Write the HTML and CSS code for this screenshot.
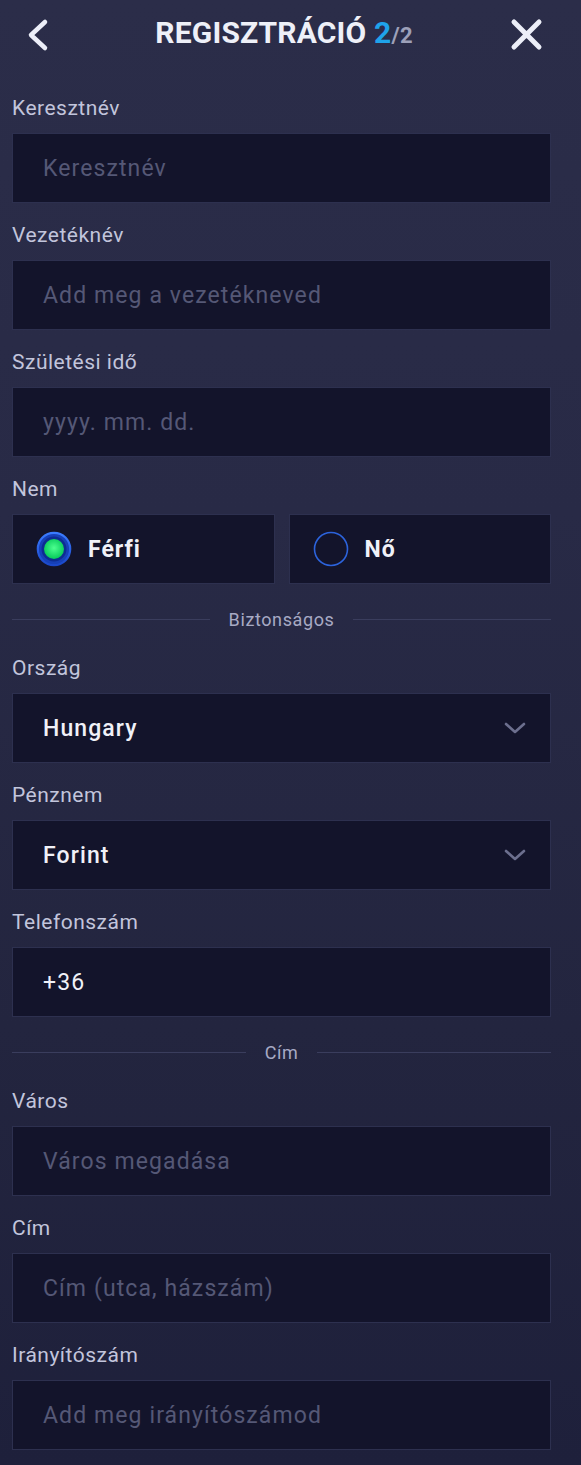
FILE: index.html
```html
<!DOCTYPE html>
<html lang="hu">
<head>
<meta charset="utf-8">
<title>Regisztráció 2/2</title>
<link rel="stylesheet" href="styles.css">
</head>
<body>
<div class="page">
  <header class="topbar">
    <button class="icon-btn back" aria-label="Vissza">
      <svg width="36" height="36" viewBox="0 0 36 36"><polyline points="22,5 8,18 22,31" fill="none" stroke="#eceef8" stroke-width="4.5" stroke-linecap="round" stroke-linejoin="round"/></svg>
    </button>
    <h1 class="title">REGISZTRÁCIÓ <span class="step">2</span><span class="total">/2</span></h1>
    <button class="icon-btn close" aria-label="Bezárás">
      <svg width="36" height="36" viewBox="0 0 36 36"><path d="M5 5 L30 30 M30 5 L5 30" fill="none" stroke="#eceef8" stroke-width="5" stroke-linecap="round"/></svg>
    </button>
  </header>

  <form class="form">
    <div class="field">
      <label class="label">Keresztnév</label>
      <div class="input placeholder">Keresztnév</div>
    </div>
    <div class="field">
      <label class="label">Vezetéknév</label>
      <div class="input placeholder">Add meg a vezetékneved</div>
    </div>
    <div class="field">
      <label class="label">Születési idő</label>
      <div class="input placeholder">yyyy. mm. dd.</div>
    </div>
    <div class="field">
      <label class="label">Nem</label>
      <div class="radio-row">
        <div class="input radio selected">
          <svg class="radio-dot" width="36" height="36" viewBox="0 0 36 36">
            <defs>
              <radialGradient id="green" cx="50%" cy="45%" r="55%">
                <stop offset="0" stop-color="#4dff8f"/>
                <stop offset="1" stop-color="#05c95a"/>
              </radialGradient>
              <linearGradient id="ring" x1="0" y1="0" x2="0" y2="1">
                <stop offset="0" stop-color="#3b7cff"/>
                <stop offset="1" stop-color="#1a47c9"/>
              </linearGradient>
            </defs>
            <circle cx="18" cy="18" r="16.2" fill="#1640b8" stroke="url(#ring)" stroke-width="2.2"/>
            <circle cx="18" cy="18" r="12.5" fill="#0d2d92"/>
            <circle cx="18" cy="18" r="10" fill="url(#green)"/>
          </svg>
          <span class="radio-text">Férfi</span>
        </div>
        <div class="input radio">
          <svg class="radio-dot" width="36" height="36" viewBox="0 0 36 36">
            <circle cx="18" cy="18" r="16.5" fill="none" stroke="#2c63dc" stroke-width="1.6"/>
          </svg>
          <span class="radio-text">Nő</span>
        </div>
      </div>
    </div>

    <div class="divider"><span class="divider-text">Biztonságos</span></div>

    <div class="field">
      <label class="label">Ország</label>
      <div class="input select">
        <span class="value">Hungary</span>
        <svg class="chevron" width="22" height="14" viewBox="0 0 22 14"><polyline points="2,3 11,11 20,3" fill="none" stroke="#6c6f8e" stroke-width="2.6" stroke-linecap="round" stroke-linejoin="round"/></svg>
      </div>
    </div>
    <div class="field">
      <label class="label">Pénznem</label>
      <div class="input select">
        <span class="value">Forint</span>
        <svg class="chevron" width="22" height="14" viewBox="0 0 22 14"><polyline points="2,3 11,11 20,3" fill="none" stroke="#6c6f8e" stroke-width="2.6" stroke-linecap="round" stroke-linejoin="round"/></svg>
      </div>
    </div>
    <div class="field">
      <label class="label">Telefonszám</label>
      <div class="input"><span class="value plain">+36</span></div>
    </div>

    <div class="divider"><span class="divider-text">Cím</span></div>

    <div class="field">
      <label class="label">Város</label>
      <div class="input placeholder">Város megadása</div>
    </div>
    <div class="field">
      <label class="label">Cím</label>
      <div class="input placeholder">Cím (utca, házszám)</div>
    </div>
    <div class="field">
      <label class="label">Irányítószám</label>
      <div class="input placeholder">Add meg irányítószámod</div>
    </div>
  </form>
</div>
</body>
</html>
```

FILE: styles.css
```css
* {
  box-sizing: border-box;
}

html, body {
  margin: 0;
  padding: 0;
}

body {
  font-family: Roboto, "Liberation Sans", sans-serif;
  background: linear-gradient(180deg, #2b2d49 0%, #282a46 35%, #23253f 70%, #1e203b 100%);
  min-height: 1465px;
  color: #f0f1f8;
}

.page {
  width: 581px;
  min-height: 1465px;
}

.topbar {
  height: 69px;
  display: flex;
  align-items: center;
  padding: 0 36px 0 23px;
}

.icon-btn {
  background: none;
  border: 0;
  padding: 0;
  margin: 0;
  width: 36px;
  height: 36px;
  display: flex;
  align-items: center;
  justify-content: center;
  cursor: pointer;
}

.title {
  flex: 1;
  margin: 0;
  text-align: center;
  font-size: 30px;
  line-height: 30px;
  font-weight: 700;
  color: #eef0f8;
  letter-spacing: 0.2px;
}

.step {
  color: #1fa3ea;
}

.total {
  color: #9da0b9;
  font-size: 22px;
}

.form {
  padding: 26px 30px 0 12px;
}

.field {
  margin-bottom: 19px;
}

.label {
  display: block;
  font-size: 21px;
  line-height: 26px;
  letter-spacing: 0.5px;
  color: #c2c5dc;
  margin-bottom: 12px;
}

.input {
  height: 70px;
  background: #13142b;
  border: 1px solid #2d304f;
  display: flex;
  align-items: center;
  padding: 0 24px 0 30px;
  font-size: 23px;
  letter-spacing: 1.1px;
}

.placeholder {
  color: #555876;
}

.value {
  color: #f0f1f8;
  font-weight: 500;
}

.value.plain {
  font-weight: 400;
}

.select {
  justify-content: space-between;
}

.chevron {
  display: block;
}

.radio-row {
  display: grid;
  grid-template-columns: 1fr 1fr;
  gap: 14px;
}

.radio {
  padding-left: 23px;
  gap: 16px;
}

.radio-dot {
  display: block;
  flex: none;
}

.radio-text {
  font-weight: 700;
  color: #f0f1f8;
  letter-spacing: 1px;
}

.divider {
  height: 33px;
  margin-bottom: 19px;
  display: flex;
  align-items: center;
  gap: 19px;
}

.divider::before,
.divider::after {
  content: "";
  flex: 1;
  height: 1px;
  background: #3a3d5d;
}

.divider-text {
  font-size: 18px;
  letter-spacing: 0.6px;
  color: #a7aac4;
}
```
